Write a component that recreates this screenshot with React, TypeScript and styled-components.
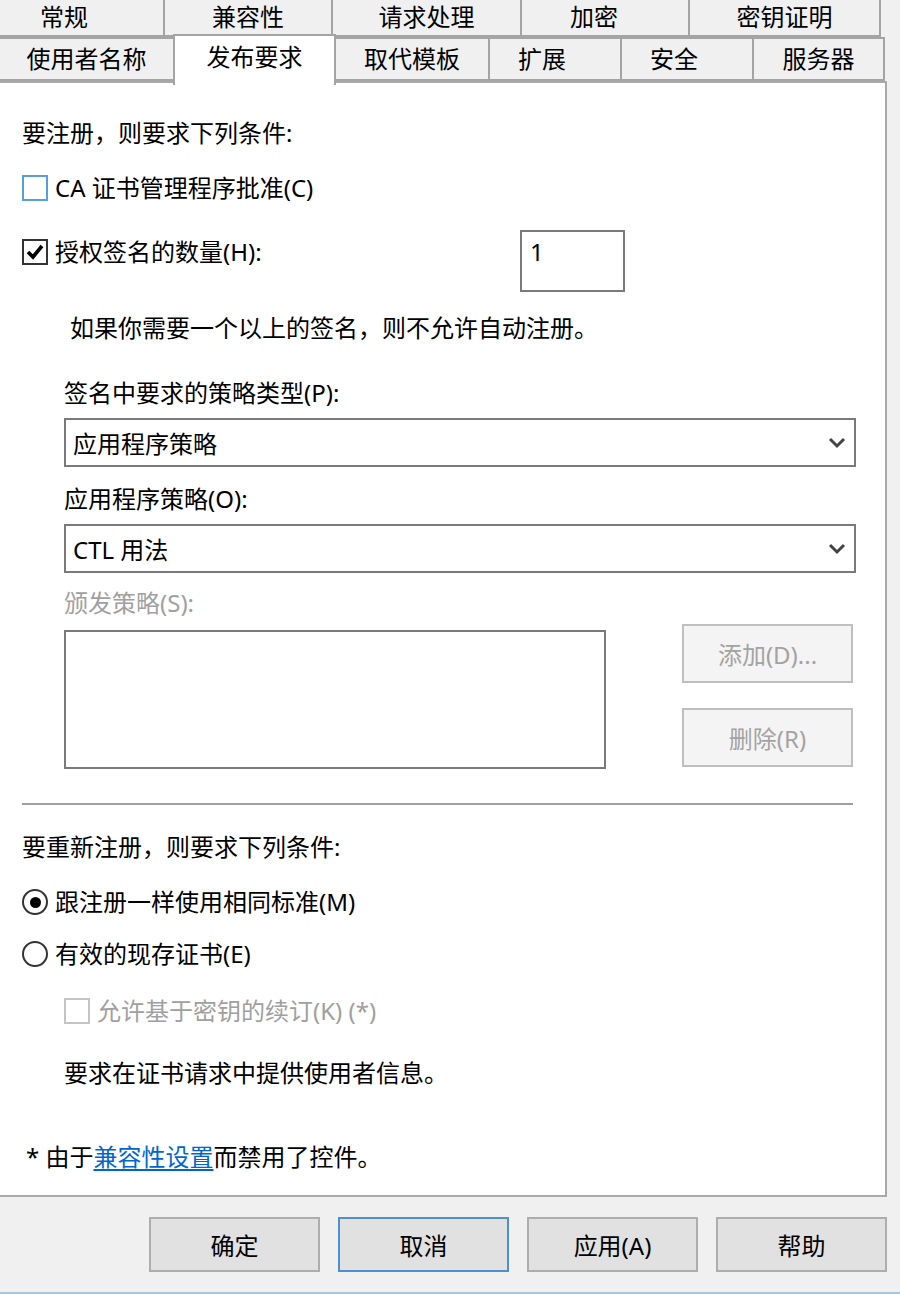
import React from "react";
import styled, { createGlobalStyle } from "styled-components";

const Global = createGlobalStyle`
  html, body { margin: 0; padding: 0; background: #f0f0f0; }
  body { font-family: "Noto Sans", "Noto Sans CJK SC", sans-serif; font-size: 24px; color: #000; }
  * { box-sizing: border-box; }
`;

const Window = styled.div`
  width: 900px;
  height: 1294px;
  background: #f0f0f0;
  display: flex;
  flex-direction: column;
  overflow: hidden;
  border-bottom: 2px solid #a9c4de;
`;

const TabRow = styled.div<{ $h: number }>`
  display: flex;
  height: ${(p) => p.$h}px;
  width: 887px;
  position: relative;
`;

const Tab = styled.div<{ $w: number; $top?: boolean; $shift?: number }>`
  width: ${(p) => p.$w}px;
  flex: none;
  height: 100%;
  background: #f0f0f0;
  border: 2px solid #a4a4a4;
  border-top: ${(p) => (p.$top ? "none" : "2px solid #a4a4a4")};
  margin-right: -2px;
  display: flex;
  align-items: center;
  justify-content: center;
  line-height: 1;
  padding-bottom: ${(p) => (p.$top ? 2 : 0)}px;
  padding-right: ${(p) => (p.$shift ?? 0) * 2}px;
  &:first-child { border-left: none; }
`;

const FirstTopTab = styled(Tab)`
  margin-left: -35px;
`;

const ActiveTab = styled.div<{ $w: number }>`
  width: ${(p) => p.$w}px;
  flex: none;
  height: 51px;
  margin-top: -3px;
  margin-right: -2px;
  background: #fff;
  border: 2px solid #a4a4a4;
  border-bottom: none;
  position: relative;
  z-index: 2;
  display: flex;
  align-items: flex-start;
  justify-content: center;
  padding-top: 9px;
  line-height: 1;
`;

const Body = styled.div`
  display: flex;
  width: 900px;
`;

const Panel = styled.div`
  width: 887px;
  height: 1116px;
  background: #fff;
  border: 2px solid #a9a9a9;
  border-left: none;
  padding-left: 22px;
  padding-top: 35px;
  display: flex;
  flex-direction: column;
`;

const Line = styled.div<{ $mt: number; $indent?: number; $gray?: boolean }>`
  margin-top: ${(p) => p.$mt}px;
  margin-left: ${(p) => p.$indent ?? 0}px;
  height: 30px;
  line-height: 30px;
  white-space: nowrap;
  color: ${(p) => (p.$gray ? "#a0a0a0" : "#000")};
`;

const OptionRow = styled.div<{ $mt: number; $indent?: number; $gray?: boolean }>`
  margin-top: ${(p) => p.$mt}px;
  margin-left: ${(p) => p.$indent ?? 0}px;
  display: flex;
  align-items: center;
  gap: 7px;
  height: 30px;
  line-height: 30px;
  white-space: nowrap;
  color: ${(p) => (p.$gray ? "#a0a0a0" : "#000")};
`;

const Box = styled.span<{ $color: string }>`
  width: 26px;
  height: 26px;
  border: 2px solid ${(p) => p.$color};
  background: #fff;
  display: inline-flex;
  align-items: center;
  justify-content: center;
  flex: none;
`;

const Radio = styled.span`
  width: 26px;
  height: 26px;
  border-radius: 50%;
  border: 2px solid #333;
  background: #fff;
  display: inline-flex;
  align-items: center;
  justify-content: center;
  flex: none;
`;

const Dot = styled.span`
  width: 11px;
  height: 11px;
  border-radius: 50%;
  background: #000;
`;

const CountRow = styled.div`
  margin-top: 27px;
  display: flex;
  align-items: flex-start;
  width: 603px;
  justify-content: space-between;
`;

const CountLabel = styled(OptionRow)`
  margin-top: 7px;
`;

const NumberBox = styled.div`
  width: 105px;
  height: 62px;
  border: 2px solid #7a7a7a;
  padding: 7px 0 0 8px;
  line-height: 26px;
`;

const Select = styled.div<{ $mt: number }>`
  margin-top: ${(p) => p.$mt}px;
  margin-left: 42px;
  width: 792px;
  height: 49px;
  border: 2px solid #7a7a7a;
  display: flex;
  align-items: center;
  justify-content: space-between;
  padding: 0 8px 0 7px;
  white-space: nowrap;
`;

const PolicyArea = styled.div`
  margin-top: 6px;
  margin-left: 42px;
  display: flex;
  width: 789px;
  justify-content: space-between;
  align-items: flex-start;
`;

const ListBox = styled.div`
  margin-top: 6px;
  width: 542px;
  height: 139px;
  border: 2px solid #7a7a7a;
`;

const SideButtons = styled.div`
  display: flex;
  flex-direction: column;
  gap: 25px;
`;

const DisabledButton = styled.div`
  width: 171px;
  height: 59px;
  border: 2px solid #bfbfbf;
  background: #f4f4f4;
  color: #a3a3a3;
  display: flex;
  align-items: center;
  justify-content: center;
  white-space: nowrap;
`;

const Separator = styled.div`
  margin-top: 34px;
  width: 831px;
  height: 2px;
  background: #a0a0a0;
`;

const Link = styled.a`
  color: #0066cc;
  text-decoration: underline;
  text-underline-offset: 3px;
`;

const Gutter = styled.div`
  flex: 1;
  background: #f0f0f0;
`;

const ButtonBar = styled.div`
  margin-top: 20px;
  display: flex;
  justify-content: flex-end;
  gap: 18px;
  padding-right: 13px;
`;

const DialogButton = styled.div<{ $default?: boolean }>`
  width: 171px;
  height: 55px;
  border: 2px solid ${(p) => (p.$default ? "#4f8fcf" : "#adadad")};
  background: #e1e1e1;
  display: flex;
  align-items: center;
  justify-content: center;
  white-space: nowrap;
`;

const Check = () => (
  <svg width="20" height="20" viewBox="0 0 20 20">
    <polyline points="3,10 8,15 17,4" fill="none" stroke="#000" strokeWidth="3.6" />
  </svg>
);

const Chevron = () => (
  <svg width="18" height="12" viewBox="0 0 18 12">
    <polyline points="2,2 9,9 16,2" fill="none" stroke="#444" strokeWidth="3" />
  </svg>
);

export default function App() {
  return (
    <>
      <Global />
      <Window>
        <TabRow $h={37}>
          <FirstTopTab $w={200} $top>常规</FirstTopTab>
          <Tab $w={170} $top>兼容性</Tab>
          <Tab $w={191} $top>请求处理</Tab>
          <Tab $w={170} $top $shift={11}>加密</Tab>
          <Tab $w={193} $top>密钥证明</Tab>
        </TabRow>
        <TabRow $h={44}>
          <Tab $w={175}>使用者名称</Tab>
          <ActiveTab $w={163}>发布要求</ActiveTab>
          <Tab $w={156}>取代模板</Tab>
          <Tab $w={134} $shift={13}>扩展</Tab>
          <Tab $w={134} $shift={13}>安全</Tab>
          <Tab $w={133}>服务器</Tab>
        </TabRow>
        <Body>
          <Panel>
            <Line $mt={0}>要注册，则要求下列条件:</Line>
            <OptionRow $mt={25}>
              <Box $color="#55a0dc" />
              CA 证书管理程序批准(C)
            </OptionRow>
            <CountRow>
              <CountLabel $mt={7}>
                <Box $color="#333">
                  <Check />
                </Box>
                授权签名的数量(H):
              </CountLabel>
              <NumberBox>1</NumberBox>
            </CountRow>
            <Line $mt={21} $indent={48}>如果你需要一个以上的签名，则不允许自动注册。</Line>
            <Line $mt={35} $indent={42}>签名中要求的策略类型(P):</Line>
            <Select $mt={10}>
              应用程序策略
              <Chevron />
            </Select>
            <Line $mt={17} $indent={42}>应用程序策略(O):</Line>
            <Select $mt={10}>
              CTL 用法
              <Chevron />
            </Select>
            <Line $mt={15} $indent={42} $gray>颁发策略(S):</Line>
            <PolicyArea>
              <ListBox />
              <SideButtons>
                <DisabledButton>添加(D)...</DisabledButton>
                <DisabledButton>删除(R)</DisabledButton>
              </SideButtons>
            </PolicyArea>
            <Separator />
            <Line $mt={27}>要重新注册，则要求下列条件:</Line>
            <OptionRow $mt={25}>
              <Radio>
                <Dot />
              </Radio>
              跟注册一样使用相同标准(M)
            </OptionRow>
            <OptionRow $mt={22}>
              <Radio />
              有效的现存证书(E)
            </OptionRow>
            <OptionRow $mt={27} $indent={42} $gray>
              <Box $color="#c4c4c4" />
              允许基于密钥的续订(K) (*)
            </OptionRow>
            <Line $mt={32} $indent={42}>要求在证书请求中提供使用者信息。</Line>
            <Line $mt={54} $indent={4}>
              * 由于<Link>兼容性设置</Link>而禁用了控件。
            </Line>
          </Panel>
          <Gutter />
        </Body>
        <ButtonBar>
          <DialogButton>确定</DialogButton>
          <DialogButton $default>取消</DialogButton>
          <DialogButton>应用(A)</DialogButton>
          <DialogButton>帮助</DialogButton>
        </ButtonBar>
      </Window>
    </>
  );
}
